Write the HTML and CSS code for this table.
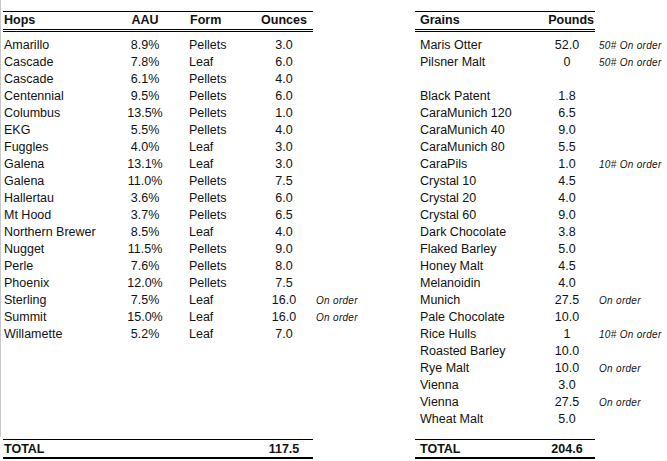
FILE: index.html
```html
<!DOCTYPE html>
<html>
<head>
<meta charset="utf-8">
<title>Inventory</title>
<link rel="stylesheet" href="styles.css">
</head>
<body>
<div class="sheet">
  <section class="panel hops">
    <div class="head hrow"><span class="name">Hops</span><span class="c">AAU</span><span class="form fh">Form</span><span class="c">Ounces</span></div>
    <div class="body">
      <div class="hrow"><span class="name">Amarillo</span><span class="c">8.9%</span><span class="form">Pellets</span><span class="c">3.0</span></div>
      <div class="hrow"><span class="name">Cascade</span><span class="c">7.8%</span><span class="form">Leaf</span><span class="c">6.0</span></div>
      <div class="hrow"><span class="name">Cascade</span><span class="c">6.1%</span><span class="form">Pellets</span><span class="c">4.0</span></div>
      <div class="hrow"><span class="name">Centennial</span><span class="c">9.5%</span><span class="form">Pellets</span><span class="c">6.0</span></div>
      <div class="hrow"><span class="name">Columbus</span><span class="c">13.5%</span><span class="form">Pellets</span><span class="c">1.0</span></div>
      <div class="hrow"><span class="name">EKG</span><span class="c">5.5%</span><span class="form">Pellets</span><span class="c">4.0</span></div>
      <div class="hrow"><span class="name">Fuggles</span><span class="c">4.0%</span><span class="form">Leaf</span><span class="c">3.0</span></div>
      <div class="hrow"><span class="name">Galena</span><span class="c">13.1%</span><span class="form">Leaf</span><span class="c">3.0</span></div>
      <div class="hrow"><span class="name">Galena</span><span class="c">11.0%</span><span class="form">Pellets</span><span class="c">7.5</span></div>
      <div class="hrow"><span class="name">Hallertau</span><span class="c">3.6%</span><span class="form">Pellets</span><span class="c">6.0</span></div>
      <div class="hrow"><span class="name">Mt Hood</span><span class="c">3.7%</span><span class="form">Pellets</span><span class="c">6.5</span></div>
      <div class="hrow"><span class="name">Northern Brewer</span><span class="c">8.5%</span><span class="form">Leaf</span><span class="c">4.0</span></div>
      <div class="hrow"><span class="name">Nugget</span><span class="c">11.5%</span><span class="form">Pellets</span><span class="c">9.0</span></div>
      <div class="hrow"><span class="name">Perle</span><span class="c">7.6%</span><span class="form">Pellets</span><span class="c">8.0</span></div>
      <div class="hrow"><span class="name">Phoenix</span><span class="c">12.0%</span><span class="form">Pellets</span><span class="c">7.5</span></div>
      <div class="hrow"><span class="name">Sterling</span><span class="c">7.5%</span><span class="form">Leaf</span><span class="c">16.0</span><span class="note">On order</span></div>
      <div class="hrow"><span class="name">Summit</span><span class="c">15.0%</span><span class="form">Leaf</span><span class="c">16.0</span><span class="note">On order</span></div>
      <div class="hrow"><span class="name">Willamette</span><span class="c">5.2%</span><span class="form">Leaf</span><span class="c">7.0</span></div>
    </div>
    <div class="foot hrow"><span class="name">TOTAL</span><span></span><span></span><span class="c">117.5</span></div>
  </section>

  <section class="panel grains">
    <div class="head grow"><span class="gname">Grains</span><span class="r">Pounds</span></div>
    <div class="body">
      <div class="grow"><span class="gname">Maris Otter</span><span class="c">52.0</span><span class="note gn">50# On order</span></div>
      <div class="grow"><span class="gname">Pilsner Malt</span><span class="c">0</span><span class="note gn">50# On order</span></div>
      <div class="grow"><span class="gname"></span><span class="c"></span></div>
      <div class="grow"><span class="gname">Black Patent</span><span class="c">1.8</span></div>
      <div class="grow"><span class="gname">CaraMunich 120</span><span class="c">6.5</span></div>
      <div class="grow"><span class="gname">CaraMunich 40</span><span class="c">9.0</span></div>
      <div class="grow"><span class="gname">CaraMunich 80</span><span class="c">5.5</span></div>
      <div class="grow"><span class="gname">CaraPils</span><span class="c">1.0</span><span class="note gn">10# On order</span></div>
      <div class="grow"><span class="gname">Crystal 10</span><span class="c">4.5</span></div>
      <div class="grow"><span class="gname">Crystal 20</span><span class="c">4.0</span></div>
      <div class="grow"><span class="gname">Crystal 60</span><span class="c">9.0</span></div>
      <div class="grow"><span class="gname">Dark Chocolate</span><span class="c">3.8</span></div>
      <div class="grow"><span class="gname">Flaked Barley</span><span class="c">5.0</span></div>
      <div class="grow"><span class="gname">Honey Malt</span><span class="c">4.5</span></div>
      <div class="grow"><span class="gname">Melanoidin</span><span class="c">4.0</span></div>
      <div class="grow"><span class="gname">Munich</span><span class="c">27.5</span><span class="note gn">On order</span></div>
      <div class="grow"><span class="gname">Pale Chocolate</span><span class="c">10.0</span></div>
      <div class="grow"><span class="gname">Rice Hulls</span><span class="c">1</span><span class="note gn">10# On order</span></div>
      <div class="grow"><span class="gname">Roasted Barley</span><span class="c">10.0</span></div>
      <div class="grow"><span class="gname">Rye Malt</span><span class="c">10.0</span><span class="note gn">On order</span></div>
      <div class="grow"><span class="gname">Vienna</span><span class="c">3.0</span></div>
      <div class="grow"><span class="gname">Vienna</span><span class="c">27.5</span><span class="note gn">On order</span></div>
      <div class="grow"><span class="gname">Wheat Malt</span><span class="c">5.0</span></div>
    </div>
    <div class="foot grow"><span class="gname">TOTAL</span><span class="c">204.6</span></div>
  </section>
</div>
</body>
</html>
```

FILE: styles.css
```css
html, body {
  margin: 0;
  padding: 0;
}

body {
  background: #fff linear-gradient(#c8c8c8, #c8c8c8) no-repeat 0 0 / 1px 437px;
  font-family: "Liberation Sans", Arial, sans-serif;
  font-size: 12.5px;
  color: #111;
  width: 667px;
  height: 461px;
  overflow: hidden;
}

.sheet {
  display: flex;
  gap: 102px;
  padding: 11px 0 0 3px;
}

.panel {
  display: flex;
  flex-direction: column;
  height: 448px;
}

.hops { width: 310px; }
.grains { width: 180px; }

.hrow,
.grow {
  display: grid;
  height: 17px;
  line-height: 17px;
  white-space: nowrap;
}

.hrow { grid-template-columns: 112px 60px 80px 58px 0; }
.grow { grid-template-columns: 124px 56px 0; }

.head {
  border-top: 1px solid #000;
  border-bottom: 3px double #000;
  font-weight: bold;
  margin-bottom: 5px;
  line-height: 16px;
}

.foot {
  margin-top: auto;
  border-top: 1px solid #000;
  border-bottom: 2px solid #000;
  font-weight: bold;
  line-height: 18px;
}

.name { padding-left: 1px; }
.gname { padding-left: 5px; }
.c { text-align: center; }
.r { text-align: right; padding-right: 1px; }
.form { padding-left: 14px; }
.fh { padding-left: 15px; }

.note {
  font-style: italic;
  font-size: 10px;
  letter-spacing: 0.3px;
  padding-left: 3px;
}

.gn { padding-left: 4px; }
```
